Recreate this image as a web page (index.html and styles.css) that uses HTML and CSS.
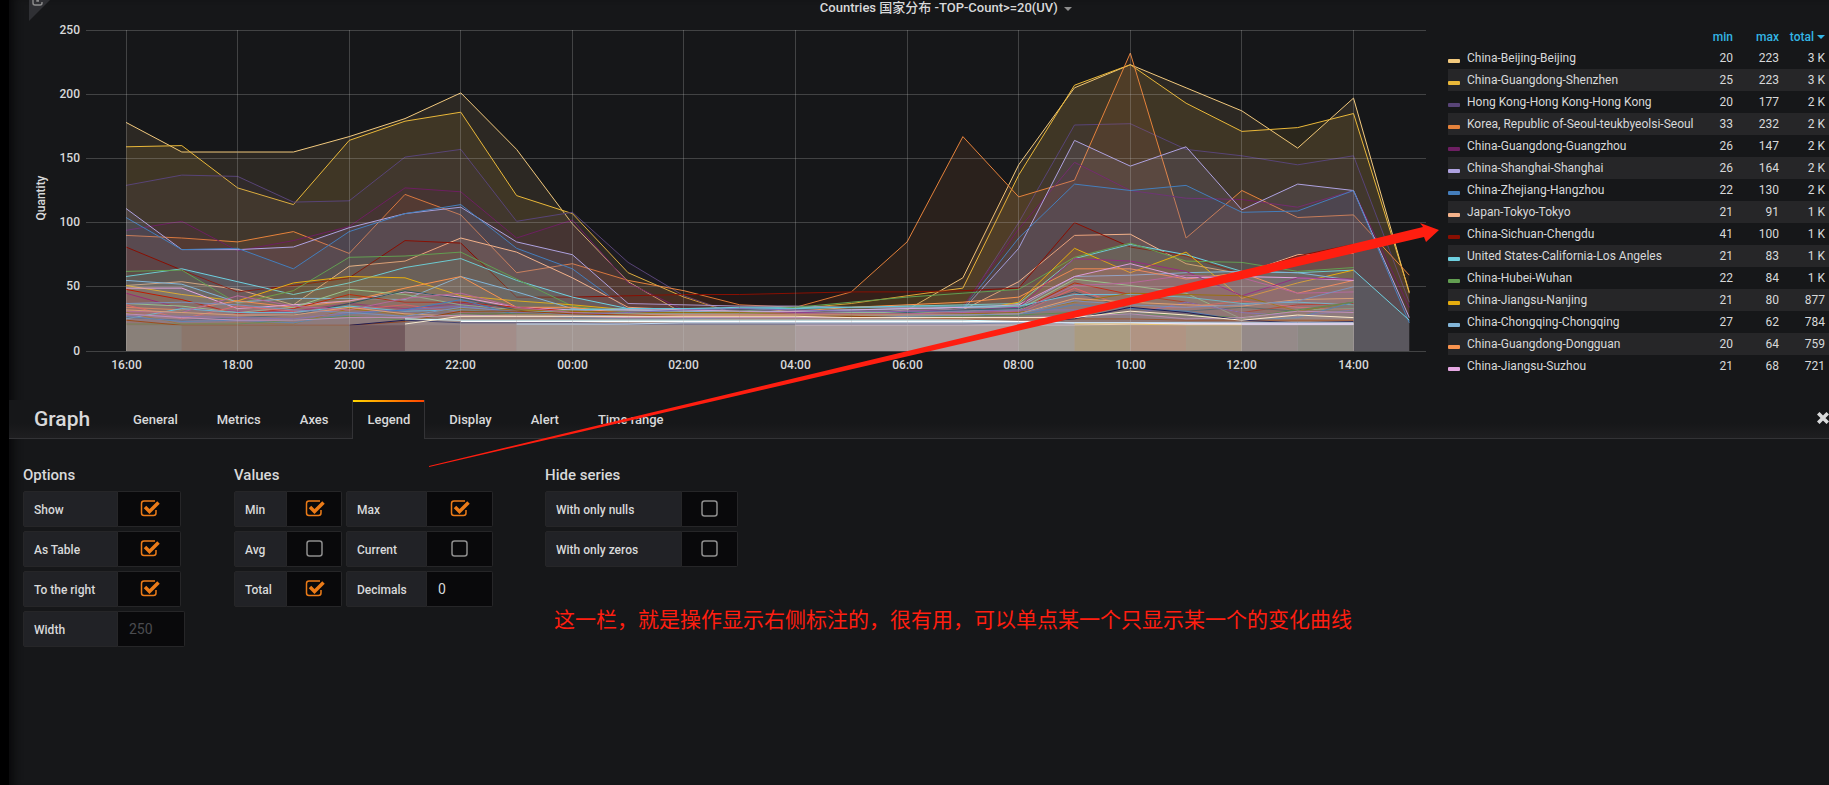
FILE: index.html
```
<!DOCTYPE html>
<html lang="en">
<head>
    <meta charset="UTF-8">
    <title>Countries</title>
    <link rel="stylesheet" href="styles.css">
</head>
<body>
<div class="page">
    <section class="panel">
        <div class="corner">
            <svg width="22" height="22" viewBox="0 0 22 22">
                <path d="M0 0H21L0 21Z" fill="#2f3034"/>
                <path d="M8 -5H6Q4 -5 4 -3V3Q4 5 6 5H11Q13 5 13 3V2M8 1L13 -4M10 1H8V-1" fill="none" stroke="#8e8e8e" stroke-width="1.4"/>
            </svg>
        </div>
        <h1 class="panel-title">Countries 国家分布 -TOP-Count&gt;=20(UV) <i class="caret"></i></h1>
        <div class="panel-body">
            <svg id="chart" class="chart"></svg>
            <table class="legend">
                <thead>
                <tr>
                    <th></th>
                    <th>min</th>
                    <th>max</th>
                    <th>total<i class="caret"></i></th>
                </tr>
                </thead>
                <tbody id="legend"></tbody>
            </table>
        </div>
    </section>

    <section class="editor">
        <header class="tabs">
            <h2>Graph</h2>
            <nav>
                <a href="#">General</a>
                <a href="#">Metrics</a>
                <a href="#">Axes</a>
                <a href="#" class="active">Legend</a>
                <a href="#">Display</a>
                <a href="#">Alert</a>
                <a href="#">Time range</a>
            </nav>
            <button class="close" aria-label="Close">
                <svg width="12" height="12" viewBox="0 0 12 12"><path d="M2.5 2.5L9.5 9.5M9.5 2.5L2.5 9.5" stroke="#d8d9da" stroke-width="3.6" stroke-linecap="square"/></svg>
            </button>
        </header>
        <div class="groups">
            <div class="group options">
                <h3>Options</h3>
                <div class="field"><label for="show">Show</label><span class="switch"><input type="checkbox" id="show" checked></span></div>
                <div class="field"><label for="table">As Table</label><span class="switch"><input type="checkbox" id="table" checked></span></div>
                <div class="field"><label for="right">To the right</label><span class="switch"><input type="checkbox" id="right" checked></span></div>
                <div class="field wide"><label for="width">Width</label><input class="text" type="text" id="width" placeholder="250"></div>
            </div>
            <div class="group">
                <h3>Values</h3>
                <div class="values">
                    <div class="field"><label for="min">Min</label><span class="switch"><input type="checkbox" id="min" checked></span></div>
                    <div class="field"><label for="max">Max</label><span class="switch"><input type="checkbox" id="max" checked></span></div>
                    <div class="field"><label for="avg">Avg</label><span class="switch"><input type="checkbox" id="avg"></span></div>
                    <div class="field"><label for="current">Current</label><span class="switch"><input type="checkbox" id="current"></span></div>
                    <div class="field"><label for="total">Total</label><span class="switch"><input type="checkbox" id="total" checked></span></div>
                    <div class="field"><label for="decimals">Decimals</label><input class="text" type="text" id="decimals" value="0"></div>
                </div>
            </div>
            <div class="group hide">
                <h3>Hide series</h3>
                <div class="field"><label for="nulls">With only nulls</label><span class="switch"><input type="checkbox" id="nulls"></span></div>
                <div class="field"><label for="zeros">With only zeros</label><span class="switch"><input type="checkbox" id="zeros"></span></div>
            </div>
        </div>
    </section>

    <!-- notes drawn on top of the page -->
    <svg class="arrow" width="1012" height="248" viewBox="428 222 1012 248">
        <path d="M429 466L1423 227L1420 223L1439 230L1426 242L1424 237L429 467Z" fill="#ff1e10"/>
    </svg>
    <p class="note">这一栏，就是操作显示右侧标注的，很有用，可以单点某一个只显示某一个的变化曲线</p>
</div>
<script src="chart.js"></script>
</body>
</html>
```
FILE: styles.css
```
* {
    margin: 0;
    padding: 0;
    box-sizing: border-box;
}

body {
    background: #000;
    color: #d8d9da;
    font: 500 12px Roboto, "Noto Sans CJK SC", sans-serif;
}

.page {
    position: relative;
    min-height: 100vh;
    margin-left: 9px;
    background: #161719;
    box-shadow: inset 10px 0 10px -6px #08080a;
    overflow: hidden;
}

.panel {
    position: relative;
    margin-left: 20px;
}

.corner {
    position: absolute;
    top: 0;
    left: 0;
}

.panel-title {
    height: 20px;
    padding-left: 34px;
    font-size: 13px;
    font-weight: 500;
    line-height: 15px;
    text-align: center;
}

.caret {
    display: inline-block;
    margin-left: 3px;
    border: 4px solid transparent;
    border-top-color: #8e8e8e;
    border-bottom: 0;
    vertical-align: 1px;
}

.panel-body {
    display: flex;
    gap: 22px;
    height: 360px;
}

.chart {
    flex: 1;
    min-width: 0;
    height: 360px;
}

.chart text {
    fill: #d8d9da;
}

.legend {
    flex: 0 0 381px;
    width: 381px;
    margin-top: 5px;
    height: 352px;
    border-collapse: collapse;
    table-layout: fixed;
}

.legend td,
.legend th {
    height: 22px;
    width: 46px;
    font-weight: 400;
    text-align: right;
    white-space: nowrap;
}

.legend th {
    padding-top: 2px;
    color: #33b5e5;
    font-weight: 500;
}

.legend th:first-child,
.legend td:first-child {
    width: auto;
    text-align: left;
}

.legend th:last-child,
.legend td:last-child {
    width: 50px;
    padding-right: 4px;
}

.legend .caret {
    border-width: 4px;
    border-top-color: #33b5e5;
    border-bottom: 0;
    vertical-align: 2px;
}

.legend tbody tr:nth-child(even) {
    background: #262628;
}

.swatch {
    display: inline-block;
    width: 12px;
    height: 4px;
    margin-right: 7px;
    border-radius: 1px;
    vertical-align: -1px;
}

.tabs {
    display: flex;
    align-items: flex-end;
    height: 39px;
    margin-top: 20px;
    padding-left: 25px;
    border-bottom: 1px solid #333336;
    background: linear-gradient(#161719 60%, #1e1e20);
}

.tabs h2 {
    width: 84px;
    font-size: 21px;
    font-weight: 500;
    line-height: 38px;
}

.tabs nav {
    display: flex;
    gap: 9px;
}

.tabs a {
    position: relative;
    height: 38px;
    padding: 0 15px;
    color: #d8d9da;
    font-size: 13px;
    line-height: 40px;
    text-decoration: none;
}

.tabs a.active {
    height: 39px;
    margin-bottom: -1px;
    padding: 0 14px;
    border: 1px solid #333336;
    border-width: 0 1px;
    background: #161719;
}

.tabs a.active::before {
    content: "";
    position: absolute;
    top: 0;
    left: 0;
    right: 0;
    height: 2px;
    background: linear-gradient(to right, #ffd500, #ff4400);
}

.close {
    width: 12px;
    height: 12px;
    margin: 0 0 14px auto;
    border: 0;
    background: none;
}

.groups {
    display: flex;
    padding: 26px 0 0 14px;
}

.group {
    margin-right: 52px;
}

.options {
    width: 159px;
}

.group h3 {
    margin-bottom: 6px;
    font-size: 15px;
    font-weight: 500;
    line-height: 20px;
}

.field {
    display: flex;
    width: 158px;
    height: 36px;
    margin-bottom: 4px;
}

.field.wide {
    width: 162px;
}

.field label {
    flex: 0 0 95px;
    padding-left: 10px;
    border: 1px solid #262628;
    border-radius: 2px 0 0 2px;
    background: #212226;
    line-height: 36px;
}

.switch,
.field .text {
    flex: 1;
    min-width: 0;
    border: 1px solid #262628;
    border-left: 0;
    border-radius: 0 2px 2px 0;
    background: #09090b;
}

.switch {
    display: flex;
    align-items: center;
    justify-content: center;
}

.switch input {
    appearance: none;
    width: 20px;
    height: 18px;
    margin: -3px 0 0 1px;
    background: url("data:image/svg+xml,%3Csvg xmlns='http://www.w3.org/2000/svg' viewBox='0 0 20 18'%3E%3Crect x='2' y='2' width='15' height='15' rx='2.5' fill='none' stroke='%238e8e8e' stroke-width='1.5'/%3E%3C/svg%3E");
}

.switch input:checked {
    background: url("data:image/svg+xml,%3Csvg xmlns='http://www.w3.org/2000/svg' viewBox='0 0 20 18'%3E%3Cpath d='M15 2H4Q1.500 2 1.500 4.500V14Q1.500 16.500 4 16.500H13.500Q16 16.500 16 14V11' fill='none' stroke='%23eb7b18' stroke-width='1.500'/%3E%3Cpath d='M5 8L9.500 12.500L18.500 3.500' fill='none' stroke='%23eb7b18' stroke-width='3.500'/%3E%3C/svg%3E");
}

.field .text {
    padding-left: 11px;
    color: #d8d9da;
    font: 14px Roboto, sans-serif;
}

.field .text::placeholder {
    color: #4b4c50;
}

.values {
    display: grid;
    grid-template-columns: 108px 147px;
    column-gap: 4px;
}

.values .field {
    width: auto;
}

.values .field label {
    flex-basis: 81px;
}

.values .field:nth-child(odd) label {
    flex-basis: 53px;
}

.hide .field {
    width: 193px;
}

.hide .field label {
    flex-basis: 137px;
}

.arrow {
    position: absolute;
    top: 222px;
    left: 419px;
}

.note {
    position: absolute;
    top: 602px;
    left: 545px;
    color: #ff1e10;
    font: 21px/32px "Noto Sans CJK SC", sans-serif;
    white-space: nowrap;
}
```
FILE: chart.js
```
// named series: name, colour, min, max, total, hourly counts from 16:00
const series = [
    ["China-Beijing-Beijing", "#f2c97d", 20, 223, "3 K", [178,155,155,155,167,181,201,157,99,54,29,28,28,28,32,57,145,205,223,205,187,158,197,45]],
    ["China-Guangdong-Shenzhen", "#eab839", 25, 223, "3 K", [159,160,127,114,164,179,186,121,107,61,42,28,33,37,43,49,137,207,223,193,171,174,185,46]],
    ["Hong Kong-Hong Kong-Hong Kong", "#584477", 20, 177, "2 K", [129,137,136,116,117,151,157,101,108,69,43,28,26,27,28,33,100,176,177,157,152,145,152,38]],
    ["Korea, Republic of-Seoul-teukbyeolsi-Seoul", "#e5823b", 33, 232, "2 K", [90,88,85,93,76,122,106,61,68,55,47,36,34,46,85,167,120,133,232,88,125,104,106,59]],
    ["China-Guangdong-Guangzhou", "#6d1f62", 26, 147, "2 K", [94,101,78,86,97,127,124,88,102,53,32,28,28,28,30,35,95,147,125,119,118,112,125,34]],
    ["China-Shanghai-Shanghai", "#aea2e0", 26, 164, "2 K", [111,79,79,81,96,107,112,85,75,37,36,35,35,34,34,32,80,164,144,159,110,130,125,26]],
    ["China-Zhejiang-Hangzhou", "#447ebc", 22, 130, "2 K", [104,79,80,64,93,107,114,80,64,32,30,29,29,29,29,33,88,130,125,129,108,109,125,22]],
    ["Japan-Tokyo-Tokyo", "#f4b28a", 21, 91, "1 K", [51,54,48,36,66,70,88,77,57,34,32,31,30,30,31,32,54,90,91,68,60,75,76]],
    ["China-Sichuan-Chengdu", "#890f02", 41, 100, "1 K", [81,63,46,51,57,86,84,42,42,43,44,44,45,46,46,47,49,100,81,74,60,74,83]],
    ["United States-California-Los Angeles", "#6ed0e0", 21, 83, "1 K", [58,64,54,44,53,65,72,55,42,33,33,34,34,34,35,36,37,72,83,75,62,61,63,24]],
    ["China-Hubei-Wuhan", "#629e51", 22, 84, "1 K", [62,63,37,47,73,74,77,56,35,30,30,31,34,38,42,45,48,73,84,70,69,62,65]],
    ["China-Jiangsu-Nanjing", "#e5ac0e", 21, 80, "877", [51,44,39,53,58,57,43,39,36,32,31,30,30,30,30,30,38,80,61,77,41,53,63]],
    ["China-Chongqing-Chongqing", "#82b5d8", 27, 62, "784", [55,52,38,41,41,40,58,46,33,32,31,30,31,32,33,34,34,58,59,61,62,61,55]],
    ["China-Guangdong-Dongguan", "#f9934e", 20, 64, "759", [34,32,39,34,39,49,58,34,34,29,28,28,31,34,36,38,42,64,64,56,61,45,55]],
    ["China-Jiangsu-Suzhou", "#e5a8e2", 21, 68, "721", [49,49,33,36,39,46,42,34,32,32,32,31,31,32,33,34,36,58,68,57,58,57,55]],
];

// smaller places, below the visible part of the legend: colour, first hour, counts
const small = [
    ["#962d82", 0, [45,33,31,31,37,33,37,32,30,29,29,29,30,30,31,32,34,72,70,62,43,57,56]],
    ["#bf1b00", 0, [48,40,29,33,44,38,38,34,31,30,30,29,29,29,29,30,31,53,44,38,30,36,37]],
    ["#9ac48a", 0, [37,35,30,34,48,44,36,32,30,29,29,29,29,30,30,31,32,56,51,45,25,32,33]],
    ["#ea6460", 0, [36,25,35,31,32,36,30,28,28,27,27,27,27,27,28,28,29,49,33,34,39,34,32]],
    ["#2f575e", 0, [26,24,26,28,37,47,41,32,26,25,25,26,27,28,30,32,33,46,33,31,34,31,38]],
    ["#65c5db", 0, [25,33,30,30,35,31,32,30,32,33,33,33,33,34,35,35,35,44,44,42,37,38,36]],
    ["#967302", 0, [30,21,22,21,33,28,33,32,31,30,30,30,29,29,29,29,30,38,45,44,43,31,38]],
    ["#b7669a", 0, [31,30,43,35,32,41,45,34,30,28,28,28,29,29,29,30,31,51,53,59,57,45,46]],
    ["#806eb7", 0, [28,27,26,25,30,32,35,30,29,30,32,33,32,31,31,31,32,32,28,38,30,27,32]],
    ["#447ebc", 0, [27,23,24,22,29,32,40,28,26,25,25,26,27,27,28,28,28,36,33,31,24,26,38]],
    ["#508642", 0, [21,21,21,24,27,24,29,29,28,27,27,27,27,27,27,27,28,30,29,28,26,32,38]],
    ["#e0a070", 0, [32,30,28,28,34,29,27,28,28,28,28,28,28,28,28,28,29,41,38,36,35,40,41]],
    ["#7b90ba", 0, [37,38,36,32,30,27,34,31,28,27,26,26,26,26,27,28,29,39,36,34,36,39,50]],
    ["#99440a", 0, [24,20,20,20,20,23,31,31,29,28,27,27,27,27,26,25,25,25,25,24,24,24,24]],
    ["#c08fb8", 0, [29,26,24,24,26,26,28,27,27,26,26,26,26,26,26,26,26,27,29,25,26,31,30]],
    ["#1f1d55", 4, [20,24,22,22,22,21,21,21,21,21,21,21,22,25,34,30,24,22,23]],
    ["#fceaca", 5, [21,27,27,27,27,27,27,27,26,26,26,26,26,31,28,24,28,26]],
    ["#cffaff", 5, [25,24,24,24,24,24,24,24,24,24,24,23,22,22,22,21,21,21]],
    ["#ffffff", 6, [23,23,23,23,23,23,23,23,23,23,23,22,22,21,21,21,21]],
    ["#bcd8f2", 7, [21,21,21,22,22,22,22,22,22,22,22,22,22,22,22,22]],
    ["#f5dcf2", 12, [20,20,20,20,20,20,21,21,21,21,21]],
    ["#e8c46e", 17, [21,21,20,20]],
    ["#d0c0df", 20, [21,21,21]],
];

// ground colour under the flat lines: first hour, last hour, colour
const bands = [
    [0, 1, "#898079"], [1, 4, "#8b766b"], [4, 5, "#72595d"], [5, 6, "#8f7c7a"],
    [6, 7, "#a38d89"], [7, 12, "#a39793"], [12, 16, "#ab9d9e"], [16, 17, "#a49e97"],
    [17, 18, "#aa9b81"], [18, 19, "#b09483"], [19, 20, "#a99987"], [20, 21, "#958a89"],
    [21, 22, "#8c8983"],
];

function drawChart() {
    const svg = document.getElementById("chart");
    const w = svg.clientWidth;
    const left = 57, top = 10, bottom = 331;
    const step = (w - left - 40) / 23.3;
    const x = h => left + 40 + h * step;
    const y = v => bottom - v * (bottom - top) / 250;
    let out = "";

    function area(color, start, values) {
        const pts = values.map((v, i) => x(start + i).toFixed(1) + "," + y(v).toFixed(1)).join(" ");
        const end = x(start + values.length - 1);
        out += `<polygon points="${x(start)},${bottom} ${pts} ${end},${bottom}" fill="${color}" fill-opacity=".1"/>`;
        out += `<polyline points="${pts}" fill="none" stroke="${color}"/>`;
    }

    series.forEach(s => area(s[1], 0, s[5]));
    small.forEach(s => area(...s));
    bands.forEach(b => {
        out += `<rect x="${x(b[0])}" y="${y(20)}" width="${x(b[1]) - x(b[0])}" height="${bottom - y(20)}" fill="${b[2]}"/>`;
    });

    for (let v = 0; v <= 250; v += 50) {
        const gy = Math.floor(y(v)) + .5;
        out += `<path d="M${left} ${gy}H${w}" stroke="#c8c8c8" stroke-opacity=".25"/>`;
        out += `<text x="51" y="${gy + 3}" text-anchor="end">${v}</text>`;
    }
    for (let h = 0; h <= 22; h += 2) {
        const gx = Math.floor(x(h)) + .5;
        const hour = String((16 + h) % 24).padStart(2, "0");
        out += `<path d="M${gx} ${top}V${bottom}" stroke="#c8c8c8" stroke-opacity=".25"/>`;
        out += `<text x="${gx}" y="349" text-anchor="middle">${hour}:00</text>`;
    }
    out += `<text transform="translate(16 178) rotate(-90)" text-anchor="middle">Quantity</text>`;
    svg.innerHTML = out;
}

document.getElementById("legend").innerHTML = series.map(s => `<tr>
    <td><span class="swatch" style="background: ${s[1]}"></span>${s[0]}</td>
    <td>${s[2]}</td><td>${s[3]}</td><td>${s[4]}</td></tr>`).join("");

drawChart();
window.addEventListener("resize", drawChart);
```
